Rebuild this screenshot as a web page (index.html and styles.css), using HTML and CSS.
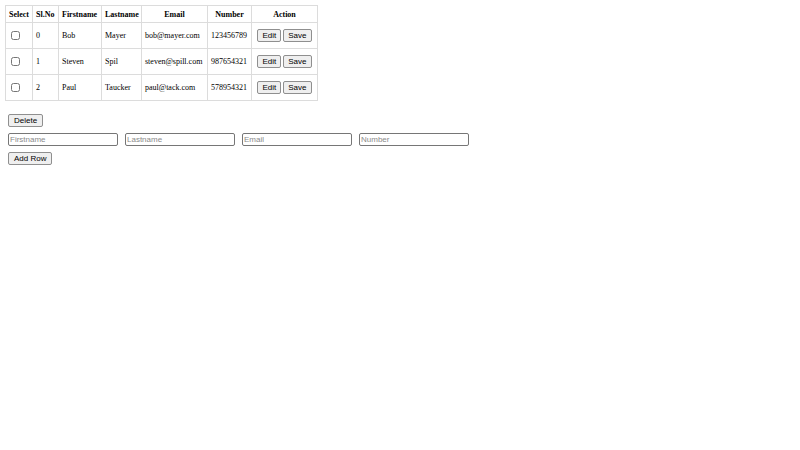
FILE: index.html
```html
<!DOCTYPE html>
<html>
<head>
<meta charset="utf-8">
<link rel="stylesheet" href="styles.css">
</head>
<body>
<table class="grid">
  <colgroup>
    <col class="c-sel"><col class="c-no"><col class="c-first"><col class="c-last"><col class="c-email"><col class="c-num"><col class="c-act">
  </colgroup>
  <thead>
    <tr><th>Select</th><th>Sl.No</th><th>Firstname</th><th>Lastname</th><th>Email</th><th>Number</th><th>Action</th></tr>
  </thead>
  <tbody>
    <tr><td><input type="checkbox" class="chk"></td><td>0</td><td>Bob</td><td>Mayer</td><td>bob@mayer.com</td><td>123456789</td><td class="act"><button class="btn">Edit</button><button class="btn">Save</button></td></tr>
    <tr><td><input type="checkbox" class="chk"></td><td>1</td><td>Steven</td><td>Spil</td><td>steven@spill.com</td><td>987654321</td><td class="act"><button class="btn">Edit</button><button class="btn">Save</button></td></tr>
    <tr><td><input type="checkbox" class="chk"></td><td>2</td><td>Paul</td><td>Taucker</td><td>paul@tack.com</td><td>578954321</td><td class="act"><button class="btn">Edit</button><button class="btn">Save</button></td></tr>
  </tbody>
</table>
<div class="controls">
  <div class="row"><button class="btn">Delete</button></div>
  <div class="row inputs">
    <input class="field" type="text" placeholder="Firstname">
    <input class="field" type="text" placeholder="Lastname">
    <input class="field" type="text" placeholder="Email">
    <input class="field" type="text" placeholder="Number">
  </div>
  <div class="row"><button class="btn">Add Row</button></div>
</div>
</body>
</html>
```
FILE: styles.css
```css
html, body { margin: 0; padding: 0; background: #fff; }
body { font-family: "Liberation Serif", "Times New Roman", serif; font-size: 8px; color: #000; }

.grid {
  margin: 5px;
  border-collapse: collapse;
  table-layout: fixed;
  width: 312px;
  border: 1px solid #dcdcdc;
}
.c-sel { width: 27px; }
.c-no { width: 26px; }
.c-first { width: 43px; }
.c-last { width: 40px; }
.c-email { width: 66px; }
.c-num { width: 44px; }
.c-act { width: 66px; }

.grid th, .grid td {
  border: 1px solid #dcdcdc;
  padding: 0 3px;
  white-space: nowrap;
  vertical-align: middle;
}
.grid th { font-weight: bold; text-align: center; height: 16px; }
.grid td { text-align: left; height: 25px; }
.grid th:nth-child(1), .grid th:nth-child(2), .grid th:nth-child(3), .grid th:nth-child(4) { text-align: left; }
.grid td.act { text-align: center; padding: 0 2px; }

.chk { width: 9px; height: 9px; margin: 0 0 0 2px; vertical-align: middle; }

.btn {
  font-family: "Liberation Sans", Arial, sans-serif;
  font-size: 8px;
  line-height: 9px;
  padding: 1px 4px;
  margin: 0 1px;
  border: 1px solid #8f8f8f;
  border-radius: 2px;
  background: #efefef;
  color: #000;
  vertical-align: middle;
}
.controls .btn { margin: 0; padding: 1px 5px; }

.controls { padding: 0 8px; display: flex; flex-direction: column; align-items: flex-start; gap: 6px; margin-top: 13px; }
.row { display: flex; }
.inputs { gap: 7px; }
.field {
  box-sizing: border-box;
  width: 110px;
  height: 13px;
  margin: 0;
  padding: 0 1px;
  font-family: "Liberation Sans", Arial, sans-serif;
  font-size: 8px;
  border: 1px solid #767676;
  border-radius: 2px;
}
.field::placeholder { color: #8a8a8a; }
```
